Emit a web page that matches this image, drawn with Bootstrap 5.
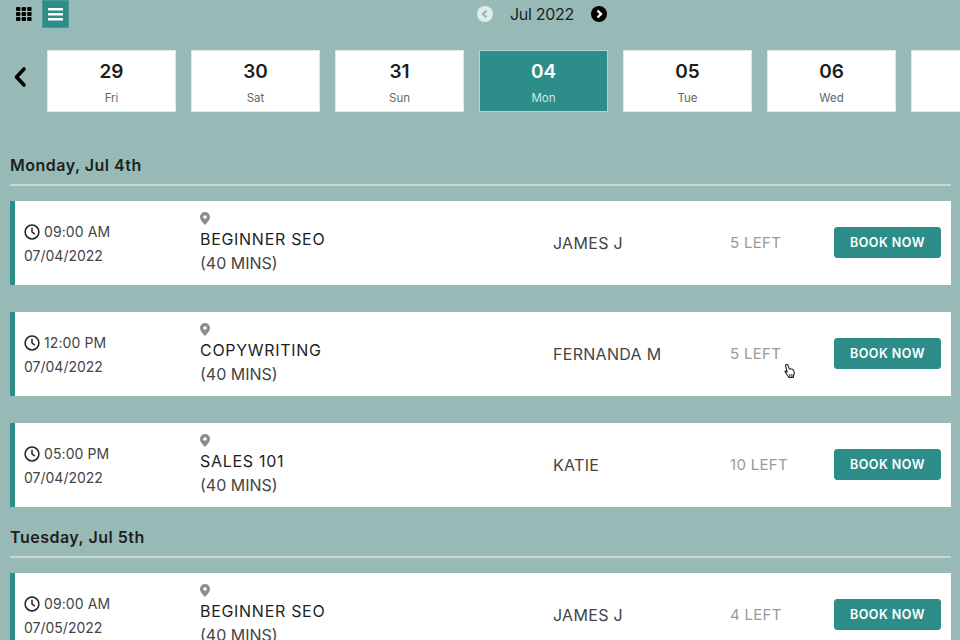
<!DOCTYPE html>
<html lang="en">
<head>
  <meta charset="UTF-8">
  <title>Class schedule</title>
  <link href="https://cdn.jsdelivr.net/npm/bootstrap@5.3.2/dist/css/bootstrap.min.css" rel="stylesheet">
  <style>
    html, body { height: 100%; overflow: hidden; }
    body {
      background-color: #98bab6;
      font-family: Inter, "Liberation Sans", sans-serif;
      color: #1b1f1f;
      position: relative;
    }
    .top-bar { height: 28px; padding-left: 15px; position: relative; }
    .view-grid { width: 18px; height: 14px; margin-right: 9px; }
    .view-list {
      width: 27px; height: 28px; background: #2d8d89;
      border: 1px solid #4d9995;
    }
    .month-picker {
      position: absolute; left: 477px; top: 6px; height: 16px;
      font-size: 16px; letter-spacing: -.3px; line-height: 16px;
    }
    .month-picker span { width: 73px; margin: 0 8px 0 17px; white-space: nowrap; }
    .day-strip { margin-top: 22px; height: 62px; padding-left: 13px; }
    .strip-back { width: 34px; flex: none; padding-bottom: 8px; }
    .strip-back svg { display: block; }
    .day-tile {
      flex: none; width: 129px; height: 62px; margin-right: 15px;
      background: #fff; border: 1px solid #dfe9e8; text-align: center;
    }
    .day-num { font-size: 19px; font-weight: 600; line-height: 22px; margin-top: 10px; }
    .day-name { font-size: 11.5px; color: #666; line-height: 14px; margin-top: 8px; }
    .day-tile.is-active { background: #2d8d89; border-color: #b5d0cd; color: #fff; }
    .is-active .day-name { color: #d2e6e4; }
    .agenda { padding: 0 9px 0 10px; }
    .day-head {
      font-size: 16px; font-weight: 600; line-height: 20px; letter-spacing: .5px;
      padding-bottom: 9px; border-bottom: 2px solid #c9d6d4; margin-bottom: 15px;
    }
    .first-head { margin-top: 43px; }
    .next-head { margin-top: 20px; margin-bottom: 15px; }
    .slot-row {
      height: 84px; background: #fff; border-left: 5px solid #2d8d89;
      margin-bottom: 27px; color: #333;
    }
    .slot-row.last-in-day { margin-bottom: 20px; }
    .slot-time { width: 185px; padding: 2px 0 0 9px; font-size: 14px; color: #444; flex: none; }
    .slot-time div { line-height: 24px; white-space: nowrap; }
    .slot-clock { letter-spacing: .1px; }
    .slot-time svg { margin: -3px 4px 0 0; vertical-align: middle; }
    .slot-title { width: 353px; flex: none; font-size: 16px; line-height: 24px; }
    .slot-title svg { display: block; margin: 0 0 2px 0; }
    .slot-name { color: #1b1f1f; letter-spacing: .7px; }
    .slot-sub { color: #444; }
    .slot-coach { width: 177px; flex: none; font-size: 16px; color: #444; letter-spacing: .3px; }
    .slot-left { width: 104px; flex: none; font-size: 15px; color: #999; letter-spacing: .3px; }
    .btn.book-btn {
      width: 107px; height: 31px; padding: 0; margin-bottom: 2px; flex: none;
      background: #2d8d89; border: 1px solid #2d8d89; border-radius: 3px;
      color: #fff; font-size: 12.5px; font-weight: 600; letter-spacing: .5px; line-height: 29px;
    }
    .hand-cursor { position: absolute; left: 783px; top: 363px; }
  </style>
</head>
<body>

<div class="top-bar d-flex align-items-center">
  <svg class="view-grid" viewBox="0 0 18 14" fill="#000">
    <rect x="1" y="0" width="4.4" height="4" rx="1"/><rect x="6.6" y="0" width="4.4" height="4" rx="1"/><rect x="12.2" y="0" width="4.4" height="4" rx="1"/>
    <rect x="1" y="5" width="4.4" height="4" rx="1"/><rect x="6.6" y="5" width="4.4" height="4" rx="1"/><rect x="12.2" y="5" width="4.4" height="4" rx="1"/>
    <rect x="1" y="10" width="4.4" height="4" rx="1"/><rect x="6.6" y="10" width="4.4" height="4" rx="1"/><rect x="12.2" y="10" width="4.4" height="4" rx="1"/>
  </svg>
  <div class="view-list d-flex align-items-center justify-content-center">
    <svg width="15" height="13" viewBox="0 0 15 13" fill="#fff">
      <rect y="0" width="15" height="2.6" rx=".6"/><rect y="5" width="15" height="2.6" rx=".6"/><rect y="10" width="15" height="2.6" rx=".6"/>
    </svg>
  </div>
  <div class="month-picker d-flex align-items-center">
    <svg width="16" height="16" viewBox="0 0 16 16"><circle cx="8" cy="8" r="8" fill="#e4ecea"/><path d="M9.5 4.5 6 8l3.5 3.5" fill="none" stroke="#98bab6" stroke-width="2.4"/></svg>
    <span>Jul 2022</span>
    <svg width="16" height="16" viewBox="0 0 16 16"><circle cx="8" cy="8" r="8" fill="#000"/><path d="M6.5 4.5 10 8l-3.5 3.5" fill="none" stroke="#fff" stroke-width="2.4"/></svg>
  </div>
</div>

<div class="day-strip d-flex align-items-center overflow-hidden" id="dayStrip">
  <div class="strip-back">
    <svg width="14" height="22" viewBox="0 0 14 22"><path d="M11 3 3.5 11 11 19" fill="none" stroke="#000" stroke-width="3.6" stroke-linecap="round" stroke-linejoin="round"/></svg>
  </div>
  <div class="day-tile"><div class="day-num">29</div><div class="day-name">Fri</div></div>
  <div class="day-tile"><div class="day-num">30</div><div class="day-name">Sat</div></div>
  <div class="day-tile"><div class="day-num">31</div><div class="day-name">Sun</div></div>
  <div class="day-tile is-active"><div class="day-num">04</div><div class="day-name">Mon</div></div>
  <div class="day-tile"><div class="day-num">05</div><div class="day-name">Tue</div></div>
  <div class="day-tile"><div class="day-num">06</div><div class="day-name">Wed</div></div>
  <div class="day-tile"></div>
</div>

<div class="agenda" id="agenda"></div>

<svg class="hand-cursor" width="13" height="17" viewBox="0 0 13 17">
  <path d="M3 1.5c1-.6 1.800 0 2.100 1l1.200 3.400 1-.2 1 .3 1.200.3 1.100 1c.8 1.500.8 3.200.2 4.700l-.6 2.500H6L2.600 9.800 2 8.200l1.200-.2 1 1.300L2.600 3c-.2-.7 0-1.200.4-1.500z" fill="#fff" stroke="#222" stroke-width="1.100" stroke-linejoin="round"/>
  <path d="M6.600 11v3M8.300 11v3M10 11v3" stroke="#222" stroke-width=".8"/>
</svg>

<script>
  const clock = '<svg width="16" height="16" viewBox="0 0 16 16" fill="none" stroke="#222" stroke-width="1.500"><circle cx="8" cy="8" r="6.900"/><path d="M8 3.800V8l2.800 2.200"/></svg>';
  const pin = '<svg width="10" height="13" viewBox="0 0 10 13"><path fill-rule="evenodd" d="M5 0a5 5 0 0 1 5 5c0 3-3.500 6.500-5 8C3.500 11.500 0 8 0 5a5 5 0 0 1 5-5zm0 3.200a1.800 1.800 0 1 0 0 3.600 1.800 1.800 0 0 0 0-3.600z" fill="#8c8c8c"/></svg>';

  const days = [
    { head: "Monday, Jul 4th", date: "07/04/2022", slots: [
      { time: "09:00 AM", name: "BEGINNER SEO", coach: "JAMES J", left: "5 LEFT" },
      { time: "12:00 PM", name: "COPYWRITING", coach: "FERNANDA M", left: "5 LEFT" },
      { time: "05:00 PM", name: "SALES 101", coach: "KATIE", left: "10 LEFT" }
    ]},
    { head: "Tuesday, Jul 5th", date: "07/05/2022", slots: [
      { time: "09:00 AM", name: "BEGINNER SEO", coach: "JAMES J", left: "4 LEFT" }
    ]}
  ];

  let html = "";
  days.forEach(function(day, d) {
    html += `<div class="day-head ${d === 0 ? "first-head" : "next-head"}">${day.head}</div>`;
    day.slots.forEach(function(s, i) {
      const last = i === day.slots.length - 1 ? " last-in-day" : "";
      html += `<div class="slot-row d-flex align-items-center${last}">
        <div class="slot-time"><div class="slot-clock">${clock}${s.time}</div><div>${day.date}</div></div>
        <div class="slot-title">${pin}<div class="slot-name">${s.name}</div><div class="slot-sub">(40 MINS)</div></div>
        <div class="slot-coach">${s.coach}</div>
        <div class="slot-left">${s.left}</div>
        <button class="btn book-btn">BOOK NOW</button>
      </div>`;
    });
  });
  document.getElementById("agenda").innerHTML = html;
</script>
<script src="https://cdn.jsdelivr.net/npm/bootstrap@5.3.2/dist/js/bootstrap.bundle.min.js"></script>
</body>
</html>
